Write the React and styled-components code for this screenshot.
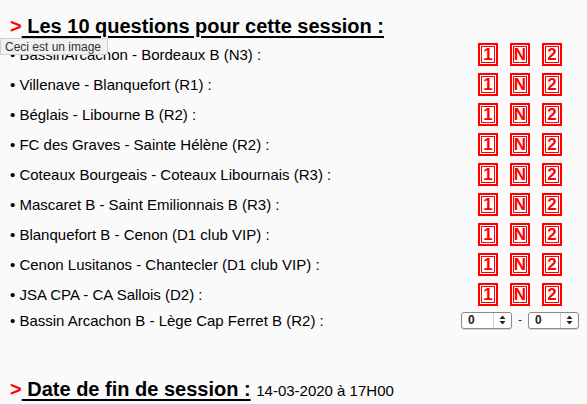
import React from "react";
import styled, { createGlobalStyle } from "styled-components";

const Global = createGlobalStyle`
  html, body {
    margin: 0;
    padding: 0;
    background: #fafafa;
  }
  body {
    font-family: "Liberation Sans", Arial, sans-serif;
    color: #000;
  }
`;

const Page = styled.div`
  position: relative;
  width: 587px;
  height: 404px;
  padding: 14px 0 0 10px;
  box-sizing: border-box;
  overflow: hidden;
`;

const Heading = styled.div`
  font-size: 20px;
  font-weight: bold;
  line-height: 24px;
  height: 25px;
  white-space: nowrap;
`;

const Arrow = styled.span`
  color: #f00;
`;

const Under = styled.span`
  text-decoration: underline;
  text-decoration-thickness: 2px;
  text-underline-offset: 3px;
`;

const Info = styled.span`
  font-size: 15px;
  font-weight: normal;
`;

const List = styled.div`
  display: flex;
  flex-direction: column;
`;

const Row = styled.div`
  display: flex;
  align-items: center;
  height: ${(p) => (p.$short ? "22px" : "30px")};
`;

const Label = styled.div`
  flex: 1;
  font-size: 15px;
  white-space: nowrap;
`;

const Choices = styled.div`
  width: 130px;
  margin-right: 2px;
  display: flex;
  justify-content: center;
  align-items: center;
  gap: 12px;
`;

const Pick = styled.div`
  width: 20px;
  height: 23px;
  box-sizing: border-box;
  border: 2px solid #f00;
  background: #fff;
  box-shadow: inset 0 0 0 1px #fff, inset 0 0 0 2px #f00;
  color: #f00;
  font-size: 17px;
  font-weight: bold;
  line-height: 19px;
  text-align: center;
`;

const ScoreBox = styled.div`
  display: flex;
  align-items: center;
  gap: 6px;
  font-size: 12px;
  color: #333;
`;

const Select = styled.div`
  width: 51px;
  height: 17px;
  box-sizing: border-box;
  border: 1px solid #8a8a8a;
  border-radius: 3px;
  background: #fff;
  display: flex;
  align-items: center;
  box-shadow: 0 1px 1px rgba(0, 0, 0, 0.15);
`;

const SelValue = styled.span`
  flex: 1;
  padding-left: 6px;
  font-size: 12px;
  font-weight: bold;
  color: #222;
`;

const SelArrows = styled.span`
  width: 17px;
  height: 100%;
  border-left: 1px solid #d0d0d0;
  display: flex;
  align-items: center;
  justify-content: center;
`;

const Gap = styled.div`
  height: 46px;
`;

const Tooltip = styled.div`
  position: absolute;
  left: 0;
  top: 38px;
  padding: 1px 6px 1px 4px;
  height: 17px;
  box-sizing: border-box;
  background: #f1f1f1;
  border: 1px solid #cfcfcf;
  font-size: 12px;
  line-height: 14px;
  color: #333;
  font-family: "Liberation Sans", Arial, sans-serif;
`;

const matches = [
  "BassinArcachon - Bordeaux B (N3) :",
  "Villenave - Blanquefort (R1) :",
  "Béglais - Libourne B (R2) :",
  "FC des Graves - Sainte Hélène (R2) :",
  "Coteaux Bourgeais - Coteaux Libournais (R3) :",
  "Mascaret B - Saint Emilionnais B (R3) :",
  "Blanquefort B - Cenon (D1 club VIP) :",
  "Cenon Lusitanos - Chantecler (D1 club VIP) :",
  "JSA CPA - CA Sallois (D2) :",
];

function Spin() {
  return (
    <svg width="7" height="10" viewBox="0 0 7 10">
      <path d="M3.5 0.5 L6.5 4 L0.5 4 Z" fill="#222" />
      <path d="M3.5 9.5 L6.5 6 L0.5 6 Z" fill="#222" />
    </svg>
  );
}

function ScoreSelect() {
  return (
    <Select>
      <SelValue>0</SelValue>
      <SelArrows>
        <Spin />
      </SelArrows>
    </Select>
  );
}

export default function App() {
  return (
    <>
      <Global />
      <Page>
        <Heading>
          <Arrow>&gt;</Arrow>
          <Under> Les 10 questions pour cette session :</Under>
        </Heading>
        <List>
          {matches.map((m) => (
            <Row key={m}>
              <Label>• {m}</Label>
              <Choices>
                <Pick>1</Pick>
                <Pick>N</Pick>
                <Pick>2</Pick>
              </Choices>
            </Row>
          ))}
          <Row $short>
            <Label>• Bassin Arcachon B - Lège Cap Ferret B (R2) :</Label>
            <Choices>
              <ScoreBox>
                <ScoreSelect />
                <span>-</span>
                <ScoreSelect />
              </ScoreBox>
            </Choices>
          </Row>
        </List>
        <Gap />
        <Heading>
          <Arrow>&gt;</Arrow>
          <Under> Date de fin de session :</Under> <Info>14-03-2020 à 17H00</Info>
        </Heading>
        <Tooltip>Ceci est un image</Tooltip>
      </Page>
    </>
  );
}
